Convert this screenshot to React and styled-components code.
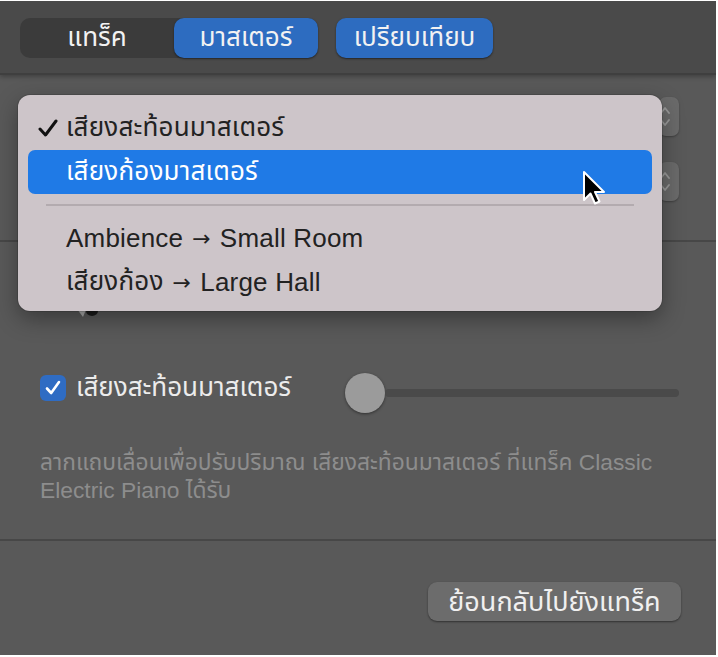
import React from 'react';
import styled, { createGlobalStyle } from 'styled-components';

const FONT = `"Liberation Sans", "Noto Sans Thai", "Noto Sans", sans-serif`;

const GlobalStyle = createGlobalStyle`
  html, body {
    margin: 0;
    padding: 0;
    background: #ffffff;
  }
  body {
    font-family: ${FONT};
  }
`;

const Window = styled.div`
  position: relative;
  margin-top: 1px;
  width: 716px;
  height: 654px;
  background: #595959;
  display: flex;
  flex-direction: column;
  overflow: hidden;
  font-family: ${FONT};
`;

const Header = styled.div`
  height: 74px;
  background: #4a4a4a;
  border-bottom: 2px solid #3f3f3f;
  box-shadow: 0 2px 4px rgba(0, 0, 0, 0.25);
  display: flex;
  align-items: flex-start;
  gap: 18px;
  padding: 17px 0 0 20px;
  box-sizing: border-box;
`;

const Segmented = styled.div`
  display: flex;
  background: #3b3b3b;
  border-radius: 10px;
  height: 40px;
`;

const Tab = styled.div`
  width: ${(p) => p.$width}px;
  height: 40px;
  display: flex;
  align-items: center;
  justify-content: center;
  border-radius: 10px;
  font-size: 26px;
  color: #f2f2f2;
  background: ${(p) => (p.$active ? '#2d6cc0' : 'transparent')};
  box-shadow: ${(p) => (p.$active ? '0 1px 2px rgba(0,0,0,0.5)' : 'none')};
`;

const TopSection = styled.div`
  height: 167px;
  border-bottom: 2px solid #474747;
  display: flex;
  flex-direction: column;
  align-items: flex-end;
  gap: 26px;
  padding: 22px 37px 0 0;
  box-sizing: border-box;
`;

const Stepper = styled.div`
  width: 20px;
  height: 39px;
  border-radius: 7px;
  background: #6a6a6a;
  box-shadow: 0 1px 2px rgba(0, 0, 0, 0.3);
  display: flex;
  align-items: center;
`;

const MixSection = styled.div`
  height: 299px;
  border-bottom: 2px solid #474747;
  padding: 53px 37px 0 40px;
  box-sizing: border-box;
  display: flex;
  flex-direction: column;
`;

const IconRow = styled.div`
  height: 24px;
  padding-left: 33px;
`;

const ControlRow = styled.div`
  margin-top: 54px;
  display: flex;
  align-items: flex-start;
`;

const CheckGroup = styled.label`
  width: 305px;
  height: 30px;
  display: flex;
  align-items: center;
  gap: 10px;
  font-size: 26px;
  color: #ececec;
`;

const CheckBox = styled.span`
  width: 26px;
  height: 26px;
  border-radius: 6px;
  background: #2f6cc3;
  display: flex;
  align-items: center;
  justify-content: center;
  flex: none;
`;

const Slider = styled.div`
  flex: 1;
  height: 40px;
  display: flex;
  align-items: center;
`;

const Thumb = styled.div`
  width: 40px;
  height: 40px;
  border-radius: 50%;
  background: #9b9b9b;
  box-shadow: 0 1px 3px rgba(0, 0, 0, 0.45);
  flex: none;
`;

const Track = styled.div`
  flex: 1;
  height: 8px;
  border-radius: 4px;
  background: #4a4a4a;
`;

const Description = styled.p`
  margin: 35px 0 0;
  font-size: 22.8px;
  line-height: 28px;
  color: #8d8d8d;
`;

const Footer = styled.div`
  flex: 1;
  display: flex;
  justify-content: flex-end;
  align-items: flex-start;
  padding: 41px 35px 0 0;
`;

const Button = styled.button`
  width: 253px;
  height: 39px;
  border: none;
  border-radius: 9px;
  background: #6c6c6c;
  color: #f0f0f0;
  font-family: ${FONT};
  font-size: 27px;
  box-shadow: 0 1px 2px rgba(0, 0, 0, 0.45);
  padding: 0;
`;

const Menu = styled.div`
  position: absolute;
  left: 18px;
  top: 94px;
  width: 644px;
  height: 216px;
  padding: 11px 10px 8px;
  box-sizing: border-box;
  background: #cdc5c9;
  border-radius: 12px;
  box-shadow: 0 8px 22px rgba(0, 0, 0, 0.35), 0 0 0 1px rgba(0, 0, 0, 0.12);
  display: flex;
  flex-direction: column;
`;

const MenuItem = styled.div`
  position: relative;
  height: 44px;
  flex: none;
  display: flex;
  align-items: center;
  padding-left: 38px;
  border-radius: 7px;
  font-size: 26px;
  letter-spacing: 0.2px;
  color: ${(p) => (p.$highlighted ? '#ffffff' : '#222222')};
  background: ${(p) => (p.$highlighted ? '#1f7ae6' : 'transparent')};
`;

const Arrow = styled.span`
  font-family: "DejaVu Sans", sans-serif;
  font-size: 22px;
  margin: 0 9px;
`;

const Check = styled.svg`
  position: absolute;
  left: 10px;
  top: 13px;
`;

const Separator = styled.div`
  height: 22px;
  flex: none;
  display: flex;
  align-items: center;
  padding: 0 18px;

  &::after {
    content: '';
    flex: 1;
    height: 2px;
    background: #b3abaf;
  }
`;

const Cursor = styled.svg`
  position: absolute;
  left: 581px;
  top: 169px;
`;

const StepperIcon = () => (
  <svg width="20" height="39" viewBox="0 0 20 39">
    <path d="M2 16 L6 11 L10 16 M2 23 L6 28 L10 23" fill="none" stroke="#9a9a9a" strokeWidth="1.8" strokeLinecap="round" strokeLinejoin="round" />
  </svg>
);

export default function App() {
  return (
    <>
      <GlobalStyle />
      <Window>
        <Header>
          <Segmented>
            <Tab $width={154}>แทร็ค</Tab>
            <Tab $width={144} $active>มาสเตอร์</Tab>
          </Segmented>
          <Tab $width={157} $active>เปรียบเทียบ</Tab>
        </Header>

        <TopSection>
          <Stepper><StepperIcon /></Stepper>
          <Stepper><StepperIcon /></Stepper>
        </TopSection>

        <MixSection>
          <IconRow>
            <svg width="30" height="24" viewBox="0 0 30 24">
              <path d="M4 14 L14 12 L10 22 Z" fill="#a9a9a9" />
              <ellipse cx="19" cy="16" rx="6" ry="5" fill="#1a1a1a" />
            </svg>
          </IconRow>
          <ControlRow>
            <CheckGroup>
              <CheckBox>
                <svg width="18" height="18" viewBox="0 0 18 18">
                  <path d="M3 9.5 L7.2 14 L15 3" fill="none" stroke="#fff" strokeWidth="2.6" strokeLinecap="round" strokeLinejoin="round" />
                </svg>
              </CheckBox>
              เสียงสะท้อนมาสเตอร์
            </CheckGroup>
            <Slider>
              <Thumb />
              <Track />
            </Slider>
          </ControlRow>
          <Description>
            ลากแถบเลื่อนเพื่อปรับปริมาณ เสียงสะท้อนมาสเตอร์ ที่แทร็ค Classic Electric Piano ได้รับ
          </Description>
        </MixSection>

        <Footer>
          <Button>ย้อนกลับไปยังแทร็ค</Button>
        </Footer>

        <Menu>
          <MenuItem>
            <Check width="20" height="18" viewBox="0 0 20 18">
              <path d="M2 10 L7.5 16 L18 2" fill="none" stroke="#111" strokeWidth="3" strokeLinecap="round" strokeLinejoin="round" />
            </Check>
            เสียงสะท้อนมาสเตอร์
          </MenuItem>
          <MenuItem $highlighted>เสียงก้องมาสเตอร์</MenuItem>
          <Separator />
          <MenuItem>Ambience<Arrow>→</Arrow>Small Room</MenuItem>
          <MenuItem>เสียงก้อง<Arrow>→</Arrow>Large Hall</MenuItem>
        </Menu>

        <Cursor width="30" height="40" viewBox="0 0 30 40">
          <path
            d="M3 2 L3 30 L9.5 23.5 L14 33.5 L18.5 31.5 L14 22 L23 22 Z"
            fill="#000"
            stroke="#fff"
            strokeWidth="2"
            strokeLinejoin="round"
          />
        </Cursor>
      </Window>
    </>
  );
}
